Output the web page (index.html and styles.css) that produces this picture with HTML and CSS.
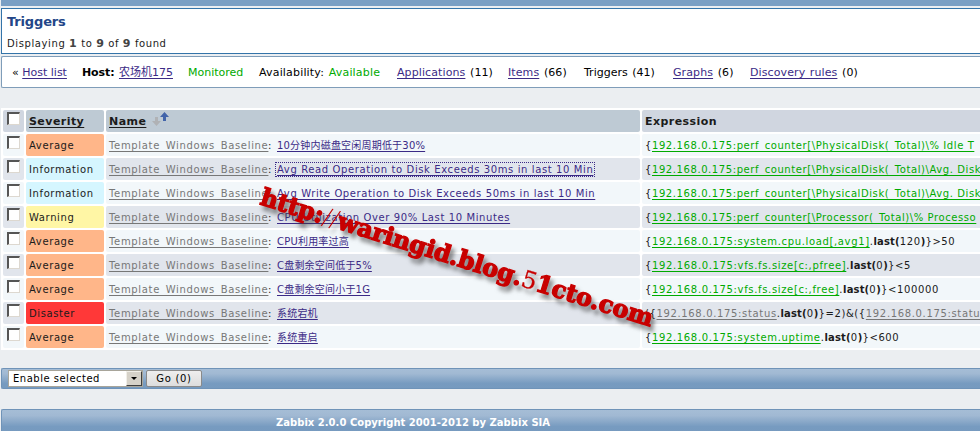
FILE: index.html
```html
<!DOCTYPE html>
<html lang="en">
<head>
<meta charset="utf-8">
<title>Triggers</title>
<link rel="stylesheet" href="styles.css">
</head>
<body>
<div class="topbar"></div>
<header class="panel title"><h1>Triggers</h1><p>Displaying <b>1</b> to <b>9</b> of <b>9</b> found</p></header>
<nav class="panel hostnav">
<span class="n1">« <a href="#">Host list</a></span>
<span class="n2"><b>Host:</b> <a href="#">农场机175</a></span>
<span class="n3 ok">Monitored</span>
<span class="n4">Availability: <i class="ok">Available</i></span>
<span class="n5"><a href="#">Applications</a> (11)</span>
<span class="n6"><a href="#">Items</a> (66)</span>
<span class="n7">Triggers (41)</span>
<span class="n8"><a href="#">Graphs</a> (6)</span>
<span class="n9"><a href="#">Discovery rules</a> (0)</span>
</nav>
<main class="table">
<div class="row head"><div class="cell"><i class="check"></i></div><div class="cell sorted"><u>Severity</u></div><div class="cell sorted"><u>Name</u><svg class="sort" width="17" height="14" viewBox="0 0 17 14"><path d="M3 5h3v4h3L4.500 14 0 9h3z" fill="#b0b2b5"/><path d="M11 9V5H8l4.500-5L17 5h-3v4z" fill="#4264aa"/></svg></div><div class="cell">Expression</div></div>
<div class="row"><div class="cell"><i class="check"></i></div><div class="cell average">Average</div><div class="cell"><a class="tpl" href="#">Template_Windows_Baseline</a><span class="colon">:</span><a class="cn" href="#">10分钟内磁盘空闲周期低于30%</a></div><div class="cell">{<a class="item perf" href="#">192.168.0.175:perf_counter[\PhysicalDisk(_Total)\% Idle T</a></div></div>
<div class="row"><div class="cell"><i class="check"></i></div><div class="cell info">Information</div><div class="cell"><a class="tpl" href="#">Template_Windows_Baseline</a><span class="colon">:</span><a class="focus" href="#">Avg Read Operation to Disk Exceeds 30ms in last 10 Min</a></div><div class="cell">{<a class="item perf" href="#">192.168.0.175:perf_counter[\PhysicalDisk(_Total)\Avg. Disk</a></div></div>
<div class="row"><div class="cell"><i class="check"></i></div><div class="cell info">Information</div><div class="cell"><a class="tpl" href="#">Template_Windows_Baseline</a><span class="colon">:</span><a href="#">Avg Write Operation to Disk Exceeds 50ms in last 10 Min</a></div><div class="cell">{<a class="item perf" href="#">192.168.0.175:perf_counter[\PhysicalDisk(_Total)\Avg. Disk</a></div></div>
<div class="row"><div class="cell"><i class="check"></i></div><div class="cell warning">Warning</div><div class="cell"><a class="tpl" href="#">Template_Windows_Baseline</a><span class="colon">:</span><a href="#">CPU Utilization Over 90% Last 10 Minutes</a></div><div class="cell">{<a class="item perf" href="#">192.168.0.175:perf_counter[\Processor(_Total)\% Processo</a></div></div>
<div class="row"><div class="cell"><i class="check"></i></div><div class="cell average">Average</div><div class="cell"><a class="tpl" href="#">Template_Windows_Baseline</a><span class="colon">:</span><a class="cn" href="#">CPU利用率过高</a></div><div class="cell">{<a class="item" href="#">192.168.0.175:system.cpu.load[,avg1]</a>.<b>last(</b>120<b>)</b>}&gt;50</div></div>
<div class="row"><div class="cell"><i class="check"></i></div><div class="cell average">Average</div><div class="cell"><a class="tpl" href="#">Template_Windows_Baseline</a><span class="colon">:</span><a class="cn" href="#">C盘剩余空间低于5%</a></div><div class="cell">{<a class="item" href="#">192.168.0.175:vfs.fs.size[c:,pfree]</a>.<b>last(</b>0<b>)</b>}&lt;5</div></div>
<div class="row"><div class="cell"><i class="check"></i></div><div class="cell average">Average</div><div class="cell"><a class="tpl" href="#">Template_Windows_Baseline</a><span class="colon">:</span><a class="cn" href="#">C盘剩余空间小于1G</a></div><div class="cell">{<a class="item" href="#">192.168.0.175:vfs.fs.size[c:,free]</a>.<b>last(</b>0<b>)</b>}&lt;100000</div></div>
<div class="row"><div class="cell"><i class="check"></i></div><div class="cell disaster">Disaster</div><div class="cell"><a class="tpl" href="#">Template_Windows_Baseline</a><span class="colon">:</span><a class="cn" href="#">系统宕机</a></div><div class="cell">({<a class="item off" href="#">192.168.0.175:status</a>.<b>last(</b>0<b>)</b>}=2)&amp;({<a class="item off" href="#">192.168.0.175:status</a></div></div>
<div class="row"><div class="cell"><i class="check"></i></div><div class="cell average">Average</div><div class="cell"><a class="tpl" href="#">Template_Windows_Baseline</a><span class="colon">:</span><a class="cn" href="#">系统重启</a></div><div class="cell">{<a class="item" href="#">192.168.0.175:system.uptime</a>.<b>last(</b>0<b>)</b>}&lt;600</div></div>
</main>
<div class="actions"><div class="select"><span>Enable selected</span><i class="arrow"></i></div><button class="go">Go (0)</button></div>
<footer class="footer">Zabbix 2.0.0 Copyright 2001-2012 by Zabbix SIA</footer>
<svg class="watermark" width="430" height="170" viewBox="250 175 430 170"><g transform="translate(259 204) rotate(17.4)"><text x="0" y="0" textLength="410" lengthAdjust="spacingAndGlyphs">http:<tspan class="thin">//</tspan>waringid.blog.<tspan class="thin five">5</tspan>1cto.com</text></g></svg>
</body>
</html>
```

FILE: styles.css
```css
* { box-sizing: border-box; }
body { margin: 0; height: 431px; overflow: hidden; background: #ebeef1; color: #1b1b1b; font: 11px/14px "DejaVu Sans", "Noto Sans CJK SC", sans-serif; padding-left: 1px; position: relative; }
a { color: #3b2a86; }
a, u { text-decoration: underline; text-decoration-skip-ink: none; text-underline-offset: 2px; text-decoration-thickness: 1px; }
i { font-style: normal; }
.topbar { height: 6px; background: #7a9fc4; }
.panel { background: #fff; border: 1px solid #7f9db9; border-right: 0; }
.title { margin-top: 2px; height: 46px; border-color: #3474a9; padding: 4px 5px; }
h1 { margin: 0; font-size: 13px; line-height: 18px; color: #234688; letter-spacing: -.15px; }
.title p { margin: 6px 0 0; font-size: 10px; letter-spacing: .6px; }
.title b { color: #444; font-size: 11px; }
.hostnav { margin-top: 2px; height: 32px; border-radius: 2px 0 0 2px; display: flex; align-items: center; padding: 1px 0 0 10px; color: #000; white-space: nowrap; }
.hostnav span { flex: none; word-spacing: 1px; }
.n1 { width: 70px; } .n2 { width: 106px; } .n3 { width: 71px; } .n4 { width: 138px; } .n5 { width: 111px; } .n6 { width: 76px; } .n7 { width: 89px; } .n8 { width: 77px; }
.hostnav .n1 { word-spacing: 0; }
.hostnav .n4 { letter-spacing: .17px; }
.hostnav .n5, .hostnav .n6, .hostnav .n8, .hostnav .n9 { letter-spacing: .1px; }
.n2 b { letter-spacing: -.1px; }
.ok { color: #0a0; }
.table { margin-top: 20px; height: 242px; background: #fff; padding: 2px; display: grid; grid-auto-rows: 22px; gap: 2px; overflow: hidden; }
.row { display: grid; grid-template-columns: 21px 78px 534px 360px; gap: 2px; }
.cell { border-radius: 2px; background: #f2f7fa; padding: 5px 0 0 3px; white-space: nowrap; font-size: 10px; letter-spacing: .61px; overflow: hidden; }
.row:nth-child(odd) .cell { background: #e1e5ec; }
.row.head .cell { background: #d0d6e0; font-weight: bold; font-size: 11px; letter-spacing: .45px; }
.row.head .cell.sorted { background: #becad4; }
.row .cell:first-child { padding: 2px 0 0 4px; }
.row .cell.average { background: #ffb689; }
.row .cell.info { background: #d5f6ff; }
.row .cell.warning { background: #fff6a5; }
.row .cell.disaster { background: #ff3838; }
.check { display: block; width: 13px; height: 13px; background: #fff; border: 2px solid; border-color: #555 #ddd8d0 #ddd8d0 #555; border-right-width: 1px; border-bottom-width: 1px; }
.sort { margin: -3px 0 0 6px; vertical-align: top; }
.tpl { color: #777; display: inline-block; width: 159px; letter-spacing: .67px; }
.colon { display: inline-block; width: 9px; }
.cn { letter-spacing: .2px; }
.focus { outline: 1px dotted #3b2a86; outline-offset: 1px; }
.item { color: #0a0; letter-spacing: .65px; }
.perf { letter-spacing: .58px; }
.off { color: #777; }
.cell b { letter-spacing: .15px; }
.actions, .footer { border: 1px solid #6f93b8; border-right: 0; border-radius: 2px 0 0 2px; background: linear-gradient(#a5bdd6, #a1b9d3 25%, #779bc0 75%, #769abf); }
.actions { margin-top: 18px; height: 21px; padding: 1px 6px; display: flex; gap: 3px; }
.select { width: 135px; height: 17px; border: 1px solid #a8a59a; background: #fff; color: #000; display: flex; line-height: 15px; font-size: 10px; letter-spacing: .5px; }
.select span { flex: 1; padding-left: 4px; }
.arrow { width: 16px; height: 15px; background: #d6d2c9; border: 1px solid; border-color: #f1efe9 #404040 #404040 #f1efe9; display: grid; place-items: center; }
.arrow::after { content: ""; border: 3px solid transparent; border-top-color: #000; border-bottom: 0; }
.go { width: 56px; height: 17px; padding: 0; border: 1px solid #8a8a8a; border-radius: 2px; background: linear-gradient(#eee, #ddd); font: 10px/13px "DejaVu Sans", sans-serif; letter-spacing: .7px; color: #000; }
.footer { margin-top: 20px; height: 24px; color: #fff; font-size: 10px; font-weight: bold; padding: 6px 0 0 274px; letter-spacing: .02px; }
.watermark { position: absolute; left: 250px; top: 175px; filter: drop-shadow(3px 5px 2px rgba(60, 60, 60, .6)); }
.watermark text { font: bold 24px "DejaVu Serif", serif; fill: #c80000; stroke: #c80000; stroke-width: 1.3px; }
.watermark .thin { font-family: "DejaVu Sans", sans-serif; font-weight: 200; stroke-width: 0; }
.watermark .five { font-family: "DejaVu Serif", serif; font-weight: normal; stroke-width: .3px; }
```
